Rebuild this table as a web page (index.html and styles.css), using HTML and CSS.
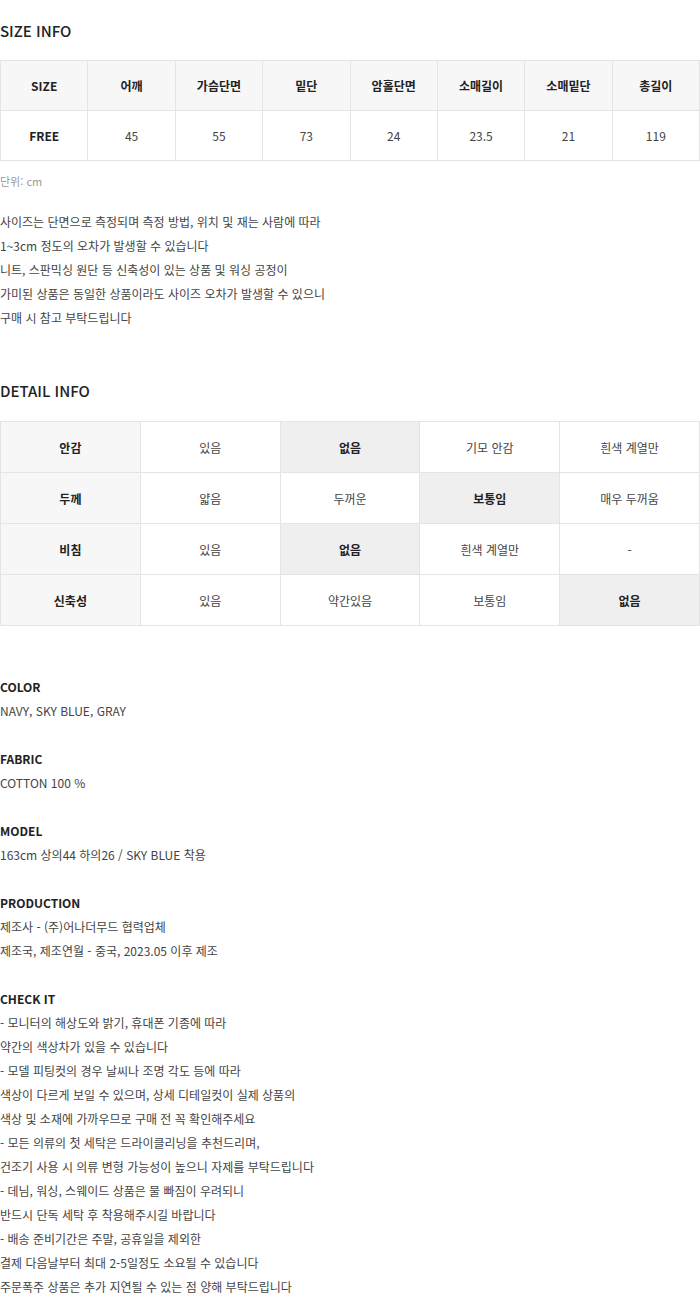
FILE: index.html
```html
<!DOCTYPE html>
<html lang="ko">
<head>
<meta charset="utf-8">
<title>Product Info</title>
<link rel="stylesheet" href="styles.css">
</head>
<body>
<main class="page">
  <h2 class="title title-size">SIZE INFO</h2>
  <table class="grid size-table">
    <tr class="head">
      <th>SIZE</th><th>어깨</th><th>가슴단면</th><th>밑단</th><th>암홀단면</th><th>소매길이</th><th>소매밑단</th><th>총길이</th>
    </tr>
    <tr>
      <th class="plain">FREE</th><td>45</td><td>55</td><td>73</td><td>24</td><td>23.5</td><td>21</td><td>119</td>
    </tr>
  </table>
  <p class="unit">단위: cm</p>
  <p class="note">사이즈는 단면으로 측정되며 측정 방법, 위치 및 재는 사람에 따라<br>1~3cm 정도의 오차가 발생할 수 있습니다<br>니트, 스판믹싱 원단 등 신축성이 있는 상품 및 워싱 공정이<br>가미된 상품은 동일한 상품이라도 사이즈 오차가 발생할 수 있으니<br>구매 시 참고 부탁드립니다</p>

  <h2 class="title title-detail">DETAIL INFO</h2>
  <table class="grid detail-table">
    <tr><th>안감</th><td>있음</td><td class="on">없음</td><td>기모 안감</td><td>흰색 계열만</td></tr>
    <tr><th>두께</th><td>얇음</td><td>두꺼운</td><td class="on">보통임</td><td>매우 두꺼움</td></tr>
    <tr><th>비침</th><td>있음</td><td class="on">없음</td><td>흰색 계열만</td><td>-</td></tr>
    <tr><th>신축성</th><td>있음</td><td>약간있음</td><td>보통임</td><td class="on">없음</td></tr>
  </table>

  <section class="info">
    <div class="block">
      <h3 class="label">COLOR</h3>
      <p class="text">NAVY, SKY BLUE, GRAY</p>
    </div>
    <div class="block">
      <h3 class="label">FABRIC</h3>
      <p class="text">COTTON 100 %</p>
    </div>
    <div class="block">
      <h3 class="label">MODEL</h3>
      <p class="text">163cm 상의44 하의26 / SKY BLUE 착용</p>
    </div>
    <div class="block">
      <h3 class="label">PRODUCTION</h3>
      <p class="text">제조사 - (주)어나더무드 협력업체<br>제조국, 제조연월 - 중국, 2023.05 이후 제조</p>
    </div>
    <div class="block">
      <h3 class="label">CHECK IT</h3>
      <p class="text">- 모니터의 해상도와 밝기, 휴대폰 기종에 따라<br>약간의 색상차가 있을 수 있습니다<br>- 모델 피팅컷의 경우 날씨나 조명 각도 등에 따라<br>색상이 다르게 보일 수 있으며, 상세 디테일컷이 실제 상품의<br>색상 및 소재에 가까우므로 구매 전 꼭 확인해주세요<br>- 모든 의류의 첫 세탁은 드라이클리닝을 추천드리며,<br>건조기 사용 시 의류 변형 가능성이 높으니 자제를 부탁드립니다<br>- 데님, 워싱, 스웨이드 상품은 물 빠짐이 우려되니<br>반드시 단독 세탁 후 착용해주시길 바랍니다<br>- 배송 준비기간은 주말, 공휴일을 제외한<br>결제 다음날부터 최대 2-5일정도 소요될 수 있습니다<br>주문폭주 상품은 추가 지연될 수 있는 점 양해 부탁드립니다</p>
    </div>
  </section>
</main>
</body>
</html>
```

FILE: styles.css
```css
* { box-sizing: border-box; }
html, body {
  margin: 0;
  padding: 0;
  background: #fff;
}
body {
  font-family: "Noto Sans CJK KR", "Noto Sans", sans-serif;
  color: #444;
  font-size: 12px;
  letter-spacing: 0;
}
.page {
  width: 700px;
}
.title {
  margin: 0;
  font-size: 15px;
  line-height: 20px;
  font-weight: 500;
  color: #222;
}
.title-size { padding-top: 21px; margin-bottom: 19px; }
.title-detail { margin-top: 51px; margin-bottom: 20px; }

.grid {
  width: 700px;
  border-collapse: collapse;
  table-layout: fixed;
}
.grid th, .grid td {
  border: 1px solid #e4e4e4;
  text-align: center;
  vertical-align: middle;
  padding: 0;
  font-size: 12px;
}
.grid th { font-weight: 700; color: #222; }
.grid td { font-weight: 400; color: #444; }

.size-table tr { height: 50px; }
.size-table .head th { background: #f7f7f7; }
.size-table th.plain { background: #fff; }

.detail-table tr { height: 51px; }
.detail-table th { background: #f7f7f7; }
.detail-table td.on { background: #efefef; font-weight: 700; color: #222; }

.unit {
  margin: 10px 0 0;
  font-size: 11px;
  line-height: 20px;
  color: #999;
}
.note {
  margin: 19px 0 0;
  line-height: 24px;
  color: #444;
}
.info {
  margin-top: 49px;
}
.block {
  margin-bottom: 24px;
}
.label {
  margin: 0;
  font-size: 12px;
  line-height: 24px;
  font-weight: 700;
  color: #222;
}
.text {
  margin: 0;
  line-height: 24px;
}
```
